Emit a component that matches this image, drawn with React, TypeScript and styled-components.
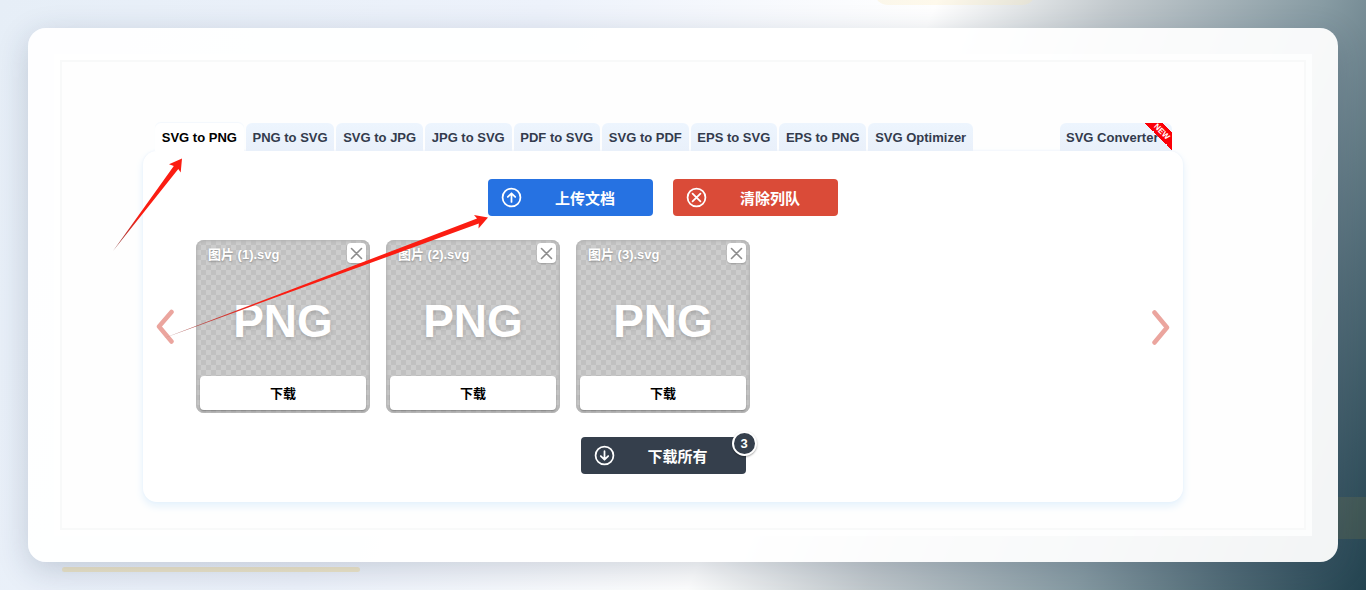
import React from 'react';
import styled, { createGlobalStyle, css } from 'styled-components';

const GlobalStyle = createGlobalStyle`
  * { box-sizing: border-box; }
  body {
    margin: 0;
    font-family: "Liberation Sans", "Noto Sans CJK SC", sans-serif;
  }
  button { font-family: inherit; cursor: pointer; }
`;

const Page = styled.div`
  position: relative;
  min-height: 100vh;
  padding: 28px;
  overflow: hidden;
  background: linear-gradient(113deg, #e6eef7 0%, #edf2fb 34%, #ffffff 58%, #c2c9cd 69%, #879ba3 82%, #526c77 91%, #234350 100%);
`;

const Blob = styled.span`
  position: absolute;
  top: -60px;
  left: 64%;
  width: 162px;
  height: 65px;
  border-radius: 14px;
  background: rgba(250, 232, 170, 0.24);
`;

const Band = styled.span`
  position: absolute;
  right: 0;
  bottom: 51px;
  width: 28px;
  height: 42px;
  background: rgba(140, 130, 70, 0.2);
`;

const Underline = styled.span`
  position: absolute;
  left: 62px;
  bottom: 18px;
  width: 298px;
  height: 5px;
  border-radius: 3px;
  background: rgba(245, 215, 130, 0.4);
`;

const Sheet = styled.main`
  position: relative;
  padding: 26px;
  border-radius: 18px;
  background: rgba(255, 255, 255, 0.94);
  box-shadow: 0 8px 32px rgba(31, 48, 80, 0.2);
`;

const Mat = styled.div`
  padding: 6px;
  background: rgba(255, 255, 255, 0.75);
`;

const Frame = styled.div`
  position: relative;
  padding: 61px 121px 26px 81px;
  border: 2px solid #f8f9f9;
  background: #fefefe;
`;

const TabBar = styled.nav`
  display: flex;
  justify-content: space-between;
  padding: 0 11px 0 12px;
`;

const TabGroup = styled.div`
  display: flex;
  flex: 0 0 818px;
  gap: 2px;
`;

const Tab = styled.a<{ $active?: boolean }>`
  position: relative;
  z-index: 1;
  display: block;
  flex: 1 1 auto;
  height: 28px;
  border-radius: 6px 6px 0 0;
  background: linear-gradient(#edf5fe, #e9f0fa);
  color: #333b4d;
  font-size: 13px;
  font-weight: 700;
  line-height: 30px;
  text-align: center;
  text-decoration: none;
  white-space: nowrap;
  ${({ $active }) => $active && css`
    background: #ffffff;
    box-shadow: 0 -1px 1px #f3f8fd;
    color: #000000;
  `}
`;

const ConverterTab = styled(Tab)`
  flex: 0 0 112px;
  padding-left: 6px;
  text-align: left;
`;

const Ribbon = styled.span`
  position: absolute;
  top: 0;
  right: 0;
  width: 27px;
  height: 27px;
  overflow: hidden;
  background: linear-gradient(45deg, transparent 50%, #fb0007 50%, #fb0007 82%, transparent 82%);
`;

const RibbonText = styled.span`
  position: absolute;
  top: 4px;
  left: 3px;
  width: 27px;
  color: #ffffff;
  font-size: 8px;
  line-height: 10px;
  text-align: center;
  transform: rotate(45deg);
`;

const Panel = styled.section`
  display: flex;
  flex-direction: column;
  align-items: center;
  gap: 24px;
  padding: 28px 12px;
  border-radius: 14px;
  background: #ffffff;
  box-shadow: 0 4px 8px #e3f1fc, 0 0 3px #eef3fb;
`;

const Actions = styled.div`
  display: flex;
  gap: 20px;
`;

const tones = { blue: '#2672e2', red: '#da4b38', dark: '#353f4c' };

const ActionButton = styled.button<{ $tone: keyof typeof tones }>`
  position: relative;
  display: flex;
  align-items: center;
  width: 165px;
  height: 37px;
  padding: 0 8px 0 13px;
  border: 0;
  border-radius: 4px;
  background: ${({ $tone }) => tones[$tone]};
  color: #ffffff;
  font-size: 15px;
  font-weight: 700;
`;

const ActionLabel = styled.span`
  flex: 1;
  text-align: center;
  padding-left: 3px;
`;

const CountBadge = styled.span`
  position: absolute;
  top: -6px;
  right: -11px;
  width: 25px;
  height: 25px;
  border: 2px solid #ffffff;
  border-radius: 50%;
  background: #353f4c;
  box-shadow: 0 1px 2px rgba(0, 0, 0, 0.35);
  font-size: 13px;
  line-height: 21px;
  text-align: center;
`;

const Carousel = styled.div`
  display: flex;
  align-items: center;
  align-self: stretch;
  justify-content: space-between;
`;

const Arrow = styled.button`
  display: flex;
  padding: 0;
  border: 0;
  background: none;
  color: #eba59e;
`;

const FileList = styled.ul`
  display: flex;
  flex: 1;
  gap: 16px;
  margin: 0;
  padding: 0 21px;
  list-style: none;
`;

const FileCard = styled.li`
  display: flex;
  flex-direction: column;
  width: 174px;
  height: 173px;
  padding: 3px 4px;
  border-radius: 8px;
  background: repeating-conic-gradient(#c1c1c1 0 25%, #cdcdcd 0 50%) 0 0 / 10px 10px;
  box-shadow: inset 0 0 3px 1px #b0b0b0;
  color: #ffffff;
`;

const CardHeader = styled.div`
  display: flex;
  justify-content: space-between;
  padding-left: 8px;
`;

const FileName = styled.span`
  font-size: 13px;
  font-weight: 700;
  line-height: 24px;
  text-shadow: 0 1px 2px rgba(0, 0, 0, 0.3);
`;

const CloseButton = styled.button`
  display: flex;
  align-items: center;
  justify-content: center;
  width: 19px;
  height: 20px;
  padding: 0;
  border: 0;
  border-radius: 4px;
  background: #ffffff;
  box-shadow: 0 1px 2px rgba(0, 0, 0, 0.2);
  color: #8d8d8d;
`;

const Format = styled.div`
  flex: 1;
  font-size: 46px;
  font-weight: 700;
  line-height: 108px;
  text-align: center;
  text-shadow: 0 2px 4px rgba(0, 0, 0, 0.16);
`;

const DownloadButton = styled.button`
  height: 34px;
  padding: 0 0 2px;
  border: 0;
  border-radius: 4px;
  background: #ffffff;
  box-shadow: 0 1px 2px rgba(0, 0, 0, 0.35);
  color: #000000;
  font-size: 13px;
  font-weight: 700;
`;

const Annotations = styled.svg`
  position: absolute;
  top: 88px;
  left: 40px;
  z-index: 2;
  pointer-events: none;
`;

const tabs = [
  'SVG to PNG', 'PNG to SVG', 'SVG to JPG', 'JPG to SVG', 'PDF to SVG',
  'SVG to PDF', 'EPS to SVG', 'EPS to PNG', 'SVG Optimizer',
];

const files = ['图片 (1).svg', '图片 (2).svg', '图片 (3).svg'];

const glyphs = {
  up: 'M12 17V7.5M7.8 11.4 12 7.2l4.2 4.2',
  down: 'M12 7v9.5M7.8 12.6l4.2 4.2 4.2-4.2',
  cross: 'M7.5 7.5l9 9M16.5 7.5l-9 9',
};

function CircleIcon({ glyph }: { glyph: keyof typeof glyphs }) {
  return (
    <svg width="21" height="21" viewBox="0 0 24 24" fill="none" stroke="currentColor" strokeWidth="2" strokeLinecap="round" strokeLinejoin="round" aria-hidden="true">
      <circle cx="12" cy="12" r="10.2" />
      <path d={glyphs[glyph]} />
    </svg>
  );
}

export default function App() {
  return (
    <Page>
      <GlobalStyle />
      <Blob />
      <Band />
      <Underline />
      <Sheet>
        <Mat>
          <Frame>
            <TabBar>
              <TabGroup>
                {tabs.map((name, i) => (
                  <Tab key={name} href="#" $active={i === 0}>{name}</Tab>
                ))}
              </TabGroup>
              <ConverterTab href="#">
                SVG Converter
                <Ribbon><RibbonText>NEW</RibbonText></Ribbon>
              </ConverterTab>
            </TabBar>
            <Panel>
              <Actions>
                <ActionButton $tone="blue"><CircleIcon glyph="up" /><ActionLabel>上传文档</ActionLabel></ActionButton>
                <ActionButton $tone="red"><CircleIcon glyph="cross" /><ActionLabel>清除列队</ActionLabel></ActionButton>
              </Actions>
              <Carousel>
                <Arrow aria-label="Previous">
                  <svg width="20" height="36" viewBox="0 0 20 36" fill="none" stroke="currentColor" strokeWidth="4.5" strokeLinecap="round" strokeLinejoin="round">
                    <path d="M16.500 3 4 17.500 16.500 32.500" />
                  </svg>
                </Arrow>
                <FileList>
                  {files.map((name) => (
                    <FileCard key={name}>
                      <CardHeader>
                        <FileName>{name}</FileName>
                        <CloseButton aria-label="Remove">
                          <svg width="13" height="13" viewBox="0 0 13 13" stroke="currentColor" strokeWidth="1.6" strokeLinecap="round">
                            <path d="M1.500 1.500l10 10M11.500 1.500l-10 10" />
                          </svg>
                        </CloseButton>
                      </CardHeader>
                      <Format>PNG</Format>
                      <DownloadButton>下载</DownloadButton>
                    </FileCard>
                  ))}
                </FileList>
                <Arrow aria-label="Next">
                  <svg width="20" height="36" viewBox="0 0 20 36" fill="none" stroke="currentColor" strokeWidth="4.5" strokeLinecap="round" strokeLinejoin="round">
                    <path d="M3.500 3.500l12.500 15-12.500 15" />
                  </svg>
                </Arrow>
              </Carousel>
              <ActionButton $tone="dark">
                <CircleIcon glyph="down" />
                <ActionLabel>下载所有</ActionLabel>
                <CountBadge>3</CountBadge>
              </ActionButton>
            </Panel>
            <Annotations width="400" height="200" viewBox="102 150 400 200" aria-hidden="true">
              <defs>
                <linearGradient id="fadeShort" gradientUnits="userSpaceOnUse" x1="114" y1="251" x2="140" y2="215">
                  <stop offset="0" stopColor="#8c4a4a" />
                  <stop offset="1" stopColor="#fb1d12" />
                </linearGradient>
                <linearGradient id="fadeLong" gradientUnits="userSpaceOnUse" x1="165" y1="338" x2="270" y2="300">
                  <stop offset="0" stopColor="#9a6262" />
                  <stop offset="1" stopColor="#fb1d12" />
                </linearGradient>
              </defs>
              <path d="M113 251 173.800 166 169 164.300 182 158.500 180.700 172.500 178.300 169Z" fill="url(#fadeShort)" />
              <path d="M163 338.500 477 218.500 474 215 488 217.500 478.500 228.500 478.800 223.500Z" fill="url(#fadeLong)" />
            </Annotations>
          </Frame>
        </Mat>
      </Sheet>
    </Page>
  );
}
